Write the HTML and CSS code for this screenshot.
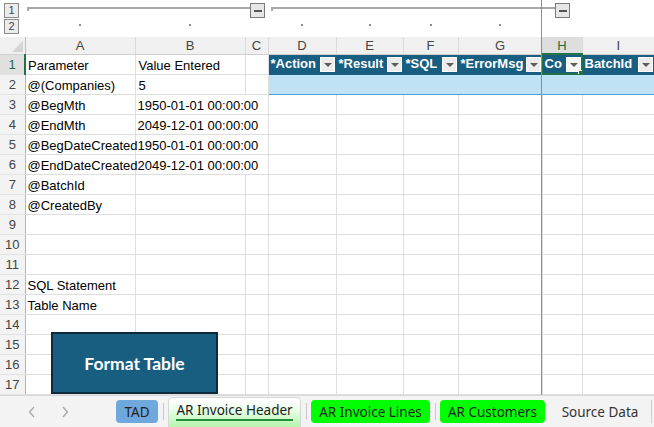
FILE: index.html
```html
<!DOCTYPE html>
<html lang="en">
<head>
  <meta charset="utf-8" />
  <title>AR Invoice Header</title>
  <link rel="stylesheet" href="styles.css">
</head>
<body>
  <div class="sheet">
    <div class="outline">
      <div class="levels">
        <span class="lvl">1</span>
        <span class="lvl">2</span>
      </div>
      <div class="outline-main">
        <div class="bars">
          <span class="bar bar-1"></span><span class="collapse"></span>
          <span class="bar bar-2"></span><span class="collapse"></span>
        </div>
        <div class="dots">
          <span class="dot"></span><span class="dot"></span><span></span>
          <span class="dot"></span><span class="dot"></span><span class="dot"></span><span class="dot"></span>
          <span></span><span></span>
        </div>
      </div>
    </div>

    <table class="grid">
      <colgroup>
        <col class="c-rh"><col class="c-a"><col class="c-b"><col class="c-c"><col class="c-d">
        <col class="c-e"><col class="c-f"><col class="c-g"><col class="c-h"><col class="c-i">
      </colgroup>
      <thead>
        <tr>
          <th class="corner"></th>
          <th>A</th><th>B</th><th>C</th><th>D</th><th>E</th><th>F</th><th>G</th>
          <th class="sel">H</th><th>I</th>
        </tr>
      </thead>
      <tbody>
        <tr>
          <th class="sel">1</th><td class="name">Parameter</td><td>Value Entered</td><td></td>
          <td class="th-cell first"><div class="hd">*Action<span class="filter"></span></div></td>
          <td class="th-cell"><div class="hd">*Result<span class="filter"></span></div></td>
          <td class="th-cell"><div class="hd">*SQL<span class="filter"></span></div></td>
          <td class="th-cell"><div class="hd">*ErrorMsg<span class="filter"></span></div></td>
          <td class="th-cell active"><div class="hd">Co<span class="filter"></span></div></td>
          <td class="th-cell"><div class="hd">BatchId<span class="filter"></span></div></td>
        </tr>
        <tr>
          <th>2</th><td class="name">@(Companies)</td><td>5</td><td></td>
          <td class="tb-cell first"></td><td class="tb-cell"></td><td class="tb-cell"></td>
          <td class="tb-cell"></td><td class="tb-cell"></td><td class="tb-cell"></td>
        </tr>
        <tr>
          <th>3</th><td class="name">@BegMth</td><td class="spill">1950-01-01 00:00:00</td><td></td>
          <td></td><td></td><td></td><td></td><td></td><td></td>
        </tr>
        <tr>
          <th>4</th><td class="name">@EndMth</td><td class="spill">2049-12-01 00:00:00</td><td></td>
          <td></td><td></td><td></td><td></td><td></td><td></td>
        </tr>
        <tr>
          <th>5</th><td class="name">@BegDateCreated</td><td class="spill">1950-01-01 00:00:00</td><td></td>
          <td></td><td></td><td></td><td></td><td></td><td></td>
        </tr>
        <tr>
          <th>6</th><td class="name">@EndDateCreated</td><td class="spill">2049-12-01 00:00:00</td><td></td>
          <td></td><td></td><td></td><td></td><td></td><td></td>
        </tr>
        <tr>
          <th>7</th><td class="name">@BatchId</td><td></td><td></td>
          <td></td><td></td><td></td><td></td><td></td><td></td>
        </tr>
        <tr>
          <th>8</th><td class="name">@CreatedBy</td><td></td><td></td>
          <td></td><td></td><td></td><td></td><td></td><td></td>
        </tr>
        <tr>
          <th>9</th><td></td><td></td><td></td>
          <td></td><td></td><td></td><td></td><td></td><td></td>
        </tr>
        <tr>
          <th>10</th><td></td><td></td><td></td>
          <td></td><td></td><td></td><td></td><td></td><td></td>
        </tr>
        <tr>
          <th>11</th><td></td><td></td><td></td>
          <td></td><td></td><td></td><td></td><td></td><td></td>
        </tr>
        <tr>
          <th>12</th><td class="name">SQL Statement</td><td></td><td></td>
          <td></td><td></td><td></td><td></td><td></td><td></td>
        </tr>
        <tr>
          <th>13</th><td class="name">Table Name</td><td></td><td></td>
          <td></td><td></td><td></td><td></td><td></td><td></td>
        </tr>
        <tr>
          <th>14</th><td></td><td></td><td></td>
          <td></td><td></td><td></td><td></td><td></td><td></td>
        </tr>
        <tr>
          <th>15</th><td></td><td></td><td></td>
          <td></td><td></td><td></td><td></td><td></td><td></td>
        </tr>
        <tr>
          <th>16</th><td></td><td></td><td></td>
          <td></td><td></td><td></td><td></td><td></td><td></td>
        </tr>
        <tr>
          <th>17</th><td></td><td></td><td></td>
          <td></td><td></td><td></td><td></td><td></td><td></td>
        </tr>
      </tbody>
    </table>

    <!-- floating shape and freeze line sit over the grid -->
    <div class="shape">Format Table</div>
    <div class="freeze"></div>
  </div>

  <div class="tabs">
    <div class="nav">
      <svg width="8" height="12" viewBox="0 0 8 12"><path d="M6 1 L1.5 6 L6 11" fill="none" stroke="#a8a8a8" stroke-width="1.3"/></svg>
      <svg width="8" height="12" viewBox="0 0 8 12"><path d="M2 1 L6.5 6 L2 11" fill="none" stroke="#a8a8a8" stroke-width="1.3"/></svg>
    </div>
    <span class="tab tab-blue">TAD</span>
    <span class="sep"></span>
    <span class="tab tab-active">AR Invoice Header</span>
    <span class="sep"></span>
    <span class="tab tab-green tab-lines">AR Invoice Lines</span>
    <span class="sep"></span>
    <span class="tab tab-green tab-cust">AR Customers</span>
    <span class="tab tab-plain">Source Data</span>
  </div>
</body>
</html>
```

FILE: styles.css
```css
html, body {
  margin: 0;
  padding: 0;
  width: 654px;
  height: 427px;
  overflow: hidden;
  background: #ffffff;
}
body {
  font-family: "Liberation Sans", Arial, sans-serif;
  font-size: 13px;
  color: #000;
}

.sheet {
  position: relative;
  height: 395px;
  overflow: hidden;
}

/* outline (grouping) strip */
.outline {
  display: flex;
  height: 37px;
}
.levels {
  width: 25px;
  display: flex;
  flex-direction: column;
  padding: 3px 0 0 4px;
  box-sizing: border-box;
}
.lvl {
  width: 13px;
  height: 13px;
  border: 1px solid #8a8a8a;
  background: #ececec;
  color: #444;
  font-size: 11px;
  line-height: 13px;
  text-align: center;
  margin-bottom: 1px;
}
.outline-main {
  flex: 1;
}
.bars {
  display: flex;
  align-items: flex-start;
  height: 17px;
}
.bar {
  height: 4px;
  margin-top: 7px;
  border-top: 2px solid #a8a8a8;
  border-left: 2px solid #a8a8a8;
  box-sizing: border-box;
}
.bar-1 {
  margin-left: 2px;
  width: 223px;
}
.bar-2 {
  margin-left: 6px;
  width: 284px;
}
.collapse {
  position: relative;
  width: 13px;
  height: 13px;
  margin-top: 3px;
  border: 1px solid #7a7a7a;
  background: #e6e6e6;
}
.collapse::before {
  content: "";
  position: absolute;
  left: 3px;
  top: 6px;
  width: 8px;
  height: 2px;
  background: #555;
}
.dots {
  display: grid;
  grid-template-columns: 110px 110px 23px 68px 67px 55px 84px 40px 72px;
  height: 20px;
}
.dots span {
  display: flex;
  justify-content: center;
}
.dot::before {
  content: "";
  width: 2px;
  height: 2px;
  margin-top: 7px;
  background: #8c8c8c;
}

/* grid */
.grid {
  border-collapse: collapse;
  table-layout: fixed;
  width: 654px;
}
.c-rh { width: 25px; }
.c-a { width: 110px; }
.c-b { width: 110px; }
.c-c { width: 23px; }
.c-d { width: 68px; }
.c-e { width: 67px; }
.c-f { width: 55px; }
.c-g { width: 84px; }
.c-h { width: 40px; }
.c-i { width: 72px; }

.grid thead th {
  height: 16px;
  padding: 0;
  background: #f0f0f0;
  color: #444;
  font-weight: normal;
  font-size: 13px;
  border-left: 1px solid #dadada;
  border-bottom: 1px solid #cfcfcf;
}
.grid thead th.sel {
  background: #dedede;
  color: #1d6b40;
  border-bottom: 2px solid #217346;
}
.grid thead th.corner {
  position: relative;
  border-left: none;
  border-right: 1px solid #bdbdbd;
}
.corner::after {
  content: "";
  position: absolute;
  right: 2px;
  bottom: 2px;
  border-left: 11px solid transparent;
  border-bottom: 11px solid #d4d4d4;
}

.grid tbody tr {
  height: 20px;
}
.grid tbody th {
  padding: 0;
  background: #f3f3f3;
  color: #444;
  font-weight: normal;
  font-size: 13px;
  text-align: center;
  border-right: 1px solid #b5b5b5;
  border-bottom: 1px solid #e2e2e2;
}
.grid tbody th.sel {
  background: #e0e0e0;
  color: #1d6b40;
  border-right: 2px solid #217346;
}
.grid td {
  padding: 0 0 0 3px;
  border: 1px solid #dedede;
  white-space: nowrap;
  overflow: hidden;
  vertical-align: bottom;
  line-height: 16px;
}
.grid td.name {
  padding-left: 2px;
  overflow: visible;
}
.grid td.spill {
  overflow: visible;
  border-right-color: transparent;
  padding-left: 2px;
}
.grid td.spill + td {
  border-left-color: transparent;
}

/* table object D1:I2 */
.grid td.th-cell {
  background: #175e81;
  border-color: #175e81;
  color: #fff;
  font-weight: bold;
  padding: 0;
  vertical-align: middle;
}
.hd {
  display: flex;
  align-items: center;
  justify-content: space-between;
  padding: 0 1px 0 2px;
}
.filter {
  position: relative;
  flex: none;
  width: 13px;
  height: 13px;
  background: #ececec;
  border: 1px solid #ffffff;
}
.filter::after {
  content: "";
  position: absolute;
  left: 3px;
  top: 5px;
  border-left: 4px solid transparent;
  border-right: 4px solid transparent;
  border-top: 4px solid #5c5c5c;
}
.grid td.active {
  position: relative;
  outline: 2px solid #217346;
  outline-offset: -1px;
}
.active .filter {
  background: #f6f6f6;
}
.active::after {
  content: "";
  position: absolute;
  right: -3px;
  bottom: -3px;
  width: 5px;
  height: 5px;
  background: #217346;
  border: 1px solid #fff;
}
.grid td.tb-cell {
  background: #bfe3f4;
  border-color: #bfe3f4;
  border-bottom: 1px solid #4aa3d8;
}
.grid td.tb-cell.first {
  border-left: 1px solid #4aa3d8;
}

/* overlays */
.freeze {
  position: absolute;
  left: 541px;
  top: 0;
  bottom: 0;
  width: 1px;
  background: #8e8e8e;
}
.shape {
  position: absolute;
  left: 51px;
  top: 332px;
  width: 163px;
  height: 58px;
  background: #175e81;
  border: 2px solid #0d2b3b;
  color: #fff;
  font-family: Lato, "Noto Sans", sans-serif;
  font-weight: bold;
  font-size: 17.5px;
  display: flex;
  align-items: center;
  justify-content: center;
}

/* sheet tabs */
.tabs {
  height: 31px;
  display: flex;
  align-items: center;
  background: #f3f3f3;
  border-top: 1px solid #d9d9d9;
  font-family: "Noto Sans", "Open Sans", sans-serif;
  font-size: 13.5px;
  color: #222;
}
.nav {
  width: 116px;
  display: flex;
  gap: 25px;
  padding-left: 28px;
  box-sizing: border-box;
}
.tab {
  height: 23px;
  display: flex;
  align-items: center;
  justify-content: center;
  border-radius: 4px;
  box-sizing: border-box;
}
.sep {
  width: 1px;
  height: 17px;
  margin: 0 4px 0 5px;
  background: #c9c9c9;
}
.tab-blue {
  width: 42px;
  background: #6fa8dc;
}
.tab-active {
  position: relative;
  align-self: flex-end;
  width: 133px;
  height: 30px;
  padding-bottom: 6px;
  border: 1px solid #d6d6d6;
  border-bottom: none;
  border-radius: 5px 5px 0 0;
  background: linear-gradient(#ffffff 10%, #e6fde3 45%, #b7f5ae 100%);
}
.tab-active::after {
  content: "";
  position: absolute;
  left: 7px;
  right: 7px;
  bottom: 6px;
  height: 2px;
  background: #1f8f3a;
}
.tab-green {
  background: #00ff00;
}
.tab-lines { width: 119px; }
.tab-cust { width: 105px; }
.tab-plain {
  width: 103px;
  margin-left: 4px;
  color: #333;
  border-right: 1px solid #cfcfcf;
  border-radius: 0;
}
```
